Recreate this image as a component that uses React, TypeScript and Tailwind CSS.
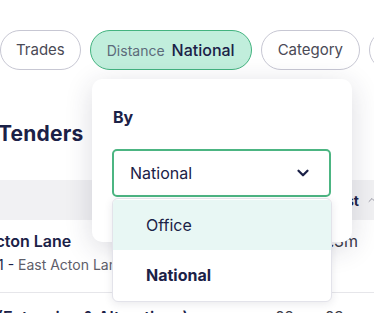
import { ChevronDown, ChevronUp } from 'lucide-react';

export default function App() {
  return (
    <div className="relative w-[374px] h-[313px] overflow-hidden bg-white font-['Inter',sans-serif] text-[#1b2147]">
      {/* Filter pills */}
      <div className="flex gap-[9px] pt-[30px] whitespace-nowrap">
        <button className="h-[40px] shrink-0 rounded-full border border-[#c7c7d3] px-[15px] text-[15px] text-[#4a4a56]">
          Trades
        </button>
        <button className="h-[40px] shrink-0 flex items-center gap-[7px] rounded-full border border-[#43b37f] bg-[#c1eedc] px-[16px]">
          <span className="text-[14px] text-[#5c6b7a]">Distance</span>
          <span className="text-[16px] font-medium text-[#1b2147]">National</span>
        </button>
        <button className="h-[40px] shrink-0 rounded-full border border-[#c7c7d3] px-[16px] text-[15px] text-[#4a4a56]">
          Category
        </button>
        <button className="h-[40px] shrink-0 rounded-full border border-[#c7c7d3] px-[17px] text-[15px] text-[#4a4a56]">
          Value
        </button>
      </div>

      <h1 className="mt-[50px] -ml-[2px] text-[21px] leading-7 font-bold tracking-[0.01em]">Tenders</h1>

      {/* Table */}
      <div className="mt-[32px] h-[40px] bg-[#f1f1f3] flex items-center justify-end gap-[7px] -mr-[4px]">
        <span className="text-[14px] font-bold">Est</span>
        <ChevronUp size={12} strokeWidth={2} className="text-[#9a9aa6]" />
      </div>
      <div className="flex border-b border-[#e6e6ea] pt-[9px] pb-[17px] pr-[16px]">
        <div className="flex-1 -ml-[16px] min-w-0">
          <div className="text-[16px] leading-6 font-semibold whitespace-nowrap">Acton Lane</div>
          <div className="mt-[2px] text-[14px] leading-5 whitespace-nowrap ml-[14px]">
            <span className="text-[#1b2147]">1 - </span>
            <span className="text-[#5e5e6a]">East Acton Lane, London</span>
          </div>
        </div>
        <div className="text-[16px] leading-6 text-[#3a3a48]">£3m</div>
      </div>
      <div className="flex pt-[12px] pr-[16px]">
        <div className="flex-1 -ml-[3px] text-[16px] leading-6 font-semibold whitespace-nowrap">(Extension &amp; Alterations)</div>
        <div className="text-[16px] leading-6 text-[#3a3a48]">£2m - £3m</div>
      </div>

      {/* Popover */}
      <div className="absolute left-[92px] top-[79px] w-[260px] h-[163px] rounded-[10px] bg-white shadow-[0_6px_28px_rgba(40,40,70,0.16)] px-[21px] pt-[26px]">
        <div className="text-[16px] leading-6 font-bold">By</div>
        <div className="mt-[20px] -ml-[1px] w-[219px] h-[48px] rounded-[5px] border-2 border-[#4cb582] flex items-center justify-between pl-[16px] pr-[17px]">
          <span className="text-[16px]">National</span>
          <ChevronDown size={18} strokeWidth={3} />
        </div>
      </div>

      {/* Select list */}
      <div className="absolute left-[112px] top-[198px] w-[220px] h-[104px] rounded-[6px] border border-[#e3e3ea] bg-white shadow-[0_2px_8px_rgba(40,40,70,0.1)] overflow-hidden pt-[1px]">
        <div className="h-[50px] bg-[#e8f7f4] flex items-center pl-[33px] text-[16px]">Office</div>
        <div className="h-[50px] flex items-center pl-[33px] text-[16px] font-bold">National</div>
      </div>
    </div>
  );
}
